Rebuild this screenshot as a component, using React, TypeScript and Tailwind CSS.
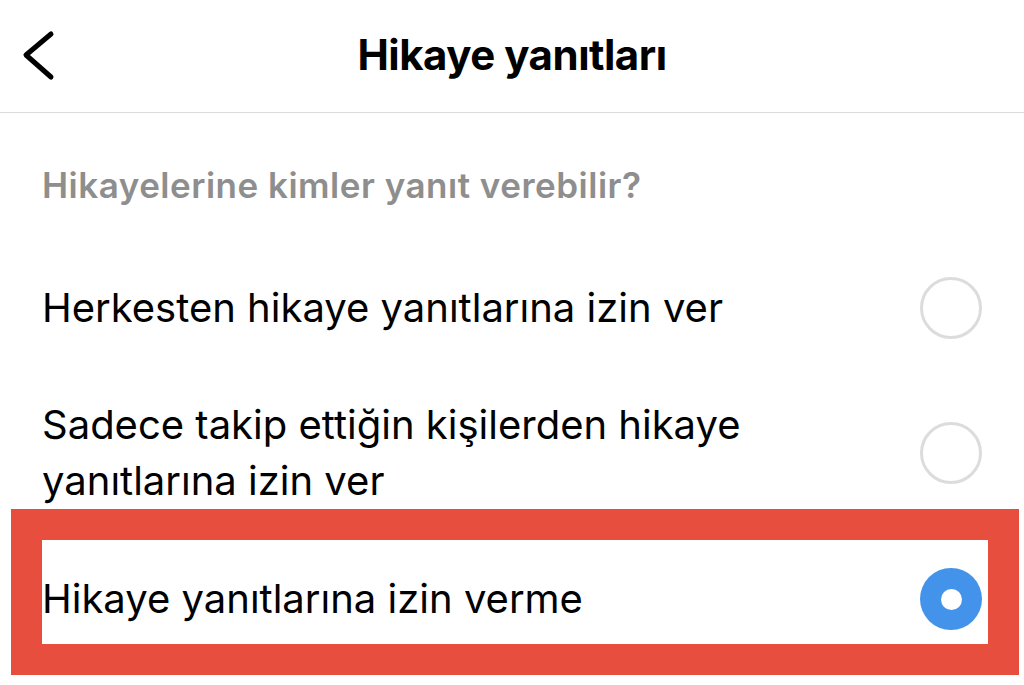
import React from 'react';

type Choice = {
    id: string;
    label: string[];
};

const choices: Choice[] = [
    { id: 'everyone', label: ['Herkesten hikaye yanıtlarına izin ver'] },
    { id: 'following', label: ['Sadece takip ettiğin kişilerden hikaye', 'yanıtlarına izin ver'] },
];

const Radio = ({ checked }: { checked?: boolean }) => {
    if (checked) {
        return (
            <span className="flex h-[62px] w-[62px] shrink-0 items-center justify-center rounded-full bg-[#4493ea]">
                <span className="h-[21px] w-[21px] rounded-full bg-white" />
            </span>
        );
    }
    return <span className="h-[62px] w-[62px] shrink-0 rounded-full border-[3px] border-[#dcdcdc] bg-white" />;
};

const BackChevron = () => (
    <svg width="40" height="56" viewBox="0 0 40 56" fill="none" stroke="#000" strokeWidth={5} strokeLinecap="round" strokeLinejoin="round">
        <path d="M35 7 L10 28 L35 50" />
    </svg>
);

export default function App() {
    return (
        <div className="min-h-[685px] w-full bg-white text-black" style={{ fontFamily: 'Inter, "Noto Sans", sans-serif' }}>
            {/* Top bar */}
            <header className="grid h-[113px] grid-cols-[1fr_auto_1fr] items-center border-b border-[#dbdbdb] pb-[3px]">
                <div className="pl-[16px]">
                    <BackChevron />
                </div>
                <h1 className="text-[42px] font-bold leading-none tracking-[-0.5px]">Hikaye yanıtları</h1>
                <div />
            </header>

            {/* Section label */}
            <div className="px-[42px] pt-[52px] pb-[53px]">
                <p className="text-[35px] font-semibold leading-[40px] tracking-[0.5px] text-[#8e8e8e]">
                    Hikayelerine kimler yanıt verebilir?
                </p>
            </div>

            {/* Options */}
            <div className="flex h-[100px] items-center justify-between px-[42px]">
                <span className="text-[40px] leading-[56px]">{choices[0].label[0]}</span>
                <Radio />
            </div>

            <div className="flex items-center justify-between px-[42px] pt-[39px]">
                <span className="text-[40px] leading-[56px]">
                    {choices[1].label.map((line) => (
                        <span key={line} className="block">
                            {line}
                        </span>
                    ))}
                </span>
                <Radio />
            </div>

            {/* Selected option, outlined */}
            <div className="ml-[11px] mr-[5px] border-[31px] border-[#e74e3d]">
                <div className="flex h-[104px] items-center justify-between pt-[14px] pr-[6px]">
                    <span className="text-[40px] leading-[56px]">Hikaye yanıtlarına izin verme</span>
                    <Radio checked />
                </div>
            </div>
        </div>
    );
}
